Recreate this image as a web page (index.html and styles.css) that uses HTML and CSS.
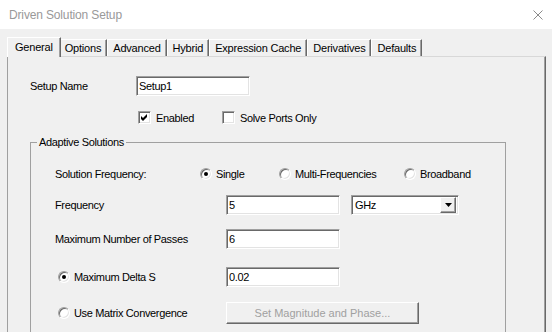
FILE: index.html
```html
<!DOCTYPE html>
<html>
<head>
<title>Driven Solution Setup</title>
<link rel="stylesheet" href="styles.css">
</head>
<body>
    <div class="window">
        <div class="titlebar">
            <span class="title">Driven Solution Setup</span>
            <svg class="close" width="10" height="10" viewBox="0 0 10 10"><path d="M0.5 0.5L9.5 9.5M9.5 0.5L0.5 9.5" stroke="#8a8a8a" stroke-width="1" fill="none"/></svg>
        </div>

        <div class="tabs">
            <div class="tab active">General</div>
            <div class="tab">Options</div>
            <div class="tab">Advanced</div>
            <div class="tab">Hybrid</div>
            <div class="tab">Expression Cache</div>
            <div class="tab">Derivatives</div>
            <div class="tab">Defaults</div>
        </div>

        <div class="panel">
            <div class="row setup">
                <span class="lbl">Setup Name</span>
                <input class="edit" type="text" value="Setup1">
            </div>

            <div class="checks">
                <label class="check"><span class="box"><svg width="7" height="7" viewBox="0 0 7 7"><path d="M0 2L2 4L6 0V3L2 7L0 5Z" fill="#000"/></svg></span>Enabled</label>
                <label class="check"><span class="box"></span>Solve Ports Only</label>
            </div>

            <fieldset class="group">
                <legend>Adaptive Solutions</legend>

                <div class="grow freq-type">
                    <span class="glbl short">Solution Frequency:</span>
                    <span class="opt single"><span class="radio on"></span>Single</span>
                    <span class="opt multi"><span class="radio"></span>Multi-Frequencies</span>
                    <span class="opt"><span class="radio"></span>Broadband</span>
                </div>

                <div class="grow field-row r-freq">
                    <span class="glbl">Frequency</span>
                    <input class="edit" type="text" value="5">
                    <div class="select">
                        <span class="val">GHz</span>
                        <span class="drop"><svg width="7" height="4" viewBox="0 0 7 4"><path d="M0 0H7L3.5 4Z" fill="#000"/></svg></span>
                    </div>
                </div>

                <div class="grow field-row r-pass">
                    <span class="glbl">Maximum Number of Passes</span>
                    <input class="edit" type="text" value="6">
                </div>

                <div class="grow field-row r-delta">
                    <span class="glbl"><span class="radio on"></span>Maximum Delta S</span>
                    <input class="edit" type="text" value="0.02">
                </div>

                <div class="grow field-row r-matrix">
                    <span class="glbl"><span class="radio"></span>Use Matrix Convergence</span>
                    <button class="push" disabled>Set Magnitude and Phase...</button>
                </div>
            </fieldset>
        </div>
    </div>
</body>
</html>
```

FILE: styles.css
```css
* { box-sizing:border-box; }
body { margin:0; font:11px "Liberation Sans", Arial, sans-serif; letter-spacing:-0.35px; color:#000; background:#f0f0f0; overflow:hidden; }

.window { width:552px; height:332px; overflow:hidden; background:#f0f0f0; }

/* title bar */
.titlebar { height:29px; background:#fff; display:flex; align-items:center; justify-content:space-between; padding:0 9px; }
.titlebar .title { font-size:12px; letter-spacing:-0.15px; color:#999; }
.titlebar .close { display:block; }

/* tab strip */
.tabs { display:flex; align-items:flex-start; height:20px; margin:8px 0 0 9px; position:relative; z-index:1; letter-spacing:-0.2px; }
.tab { height:17px; margin-top:2px; padding:0 5px; line-height:16px; border:1px solid; border-bottom:none; border-color:#fff #696969 #fff #fff; box-shadow:inset -1px 0 #a0a0a0; }
.tab.active { height:20px; margin:0 -2px; padding:0 7px; line-height:18px; background:#f0f0f0; position:relative; }

.panel { width:539px; height:300px; margin:-1px 0 0 7px; border:1px solid; border-color:#d8d8d8 #696969 #696969 #a0a0a0; box-shadow:inset -1px -1px #a0a0a0; }

/* edit boxes */
.edit { display:block; width:114px; height:20px; margin:0; padding:0 2px; font:inherit; letter-spacing:inherit; color:#000; background:#fff; border:1px solid; border-color:#a0a0a0 #fff #fff #a0a0a0; box-shadow:inset 1px 1px #696969, inset -1px -1px #e3e3e3; outline:none; }

.row { display:flex; align-items:center; }
.setup { margin-top:19px; padding-left:22px; }
.setup .lbl { width:106px; }

/* check boxes */
.checks { display:grid; grid-template-columns:84px auto; margin-top:15px; padding-left:130px; height:13px; }
.check { display:flex; align-items:center; height:13px; }
.box { width:13px; height:13px; margin-right:5px; display:flex; align-items:center; justify-content:center; background:#fff; border:1px solid; border-color:#a0a0a0 #fff #fff #a0a0a0; box-shadow:inset 1px 1px #696969, inset -1px -1px #e3e3e3; }
.box svg { display:block; }

/* radio buttons */
.radio { position:relative; flex:none; width:12px; height:12px; margin-right:4px; border-radius:50%; background:#fff; border:1px solid; border-color:#a0a0a0 #fff #fff #a0a0a0; box-shadow:inset 1px 1px #696969, inset -1px -1px #e3e3e3; }
.radio.on::after { content:""; position:absolute; left:3px; top:3px; width:4px; height:4px; border-radius:50%; background:#000; }

/* group box */
.group { width:476px; height:220px; margin:12px 0 0 22px; padding:0 0 0 24px; border:1px solid #a0a0a0; min-width:0; }
.group legend { margin-left:-18px; padding:0 2px; line-height:13px; }

.grow { display:flex; align-items:center; }
.glbl { display:flex; align-items:center; width:171px; flex:none; }
.glbl .radio { margin-left:3px; }
.glbl.short { width:145px; }

.freq-type { margin-top:18px; height:14px; }
.opt { display:flex; align-items:center; }
.opt.single { width:79px; }
.opt.multi { width:125px; }

.r-freq { margin-top:14px; }
.r-pass { margin-top:14px; }
.r-delta { margin-top:18px; }
.r-matrix { margin-top:15px; }

/* combo box */
.select { display:flex; align-items:center; width:108px; height:20px; margin-left:11px; padding:2px; background:#fff; border:1px solid; border-color:#a0a0a0 #fff #fff #a0a0a0; box-shadow:inset 1px 1px #696969, inset -1px -1px #e3e3e3; }
.select .val { flex:1; padding-left:1px; }
.select .drop { display:flex; align-items:center; justify-content:center; width:16px; height:16px; background:#f0f0f0; border:1px solid; border-color:#fff #696969 #696969 #fff; box-shadow:inset -1px -1px #a0a0a0; }
.select .drop svg { display:block; }

/* push button */
.push { width:193px; height:22px; margin:0; padding:0; font:11px "Liberation Sans", Arial, sans-serif; letter-spacing:0; color:#a0a0a0; background:#f0f0f0; border:1px solid; border-color:#fff #696969 #696969 #fff; box-shadow:inset -1px -1px #a0a0a0; }
```
